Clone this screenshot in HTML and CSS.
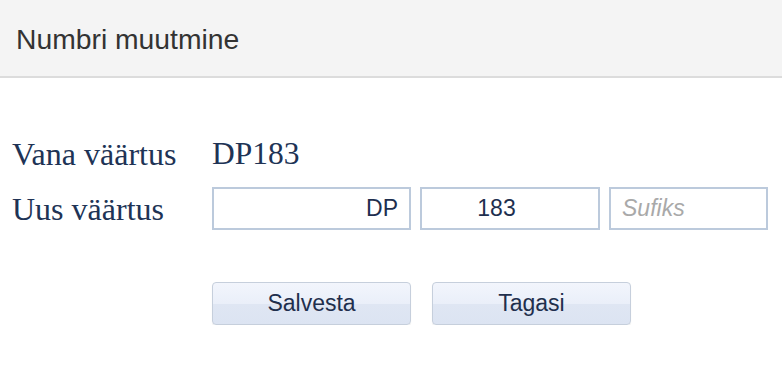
FILE: index.html
```html
<!DOCTYPE html>
<html lang="et">
<head>
<meta charset="utf-8">
<title>Numbri muutmine</title>
<link rel="stylesheet" href="styles.css">
</head>
<body>
<div class="header"><span class="title">Numbri muutmine</span></div>
<div class="content">
  <div class="row row-old">
    <div class="label">Vana väärtus</div>
    <div class="value">DP183</div>
  </div>
  <div class="row row-new">
    <div class="label">Uus väärtus</div>
    <div class="fields">
      <input class="field field-prefix" type="text" value="DP">
      <input class="field field-number" type="text" value="183">
      <input class="field field-suffix" type="text" placeholder="Sufiks">
    </div>
  </div>
  <div class="actions">
    <button class="btn" type="button">Salvesta</button>
    <button class="btn" type="button">Tagasi</button>
  </div>
</div>
</body>
</html>
```
FILE: styles.css
```css
html, body {
  margin: 0;
  padding: 0;
  background: #ffffff;
}
body {
  font-family: "Liberation Serif", "Times New Roman", serif;
  color: #203355;
}
.header {
  height: 73px;
  padding: 3px 16px 0;
  display: flex;
  align-items: center;
  background: #f4f4f4;
  border-bottom: 2px solid #dcdcdc;
}
.title {
  font-family: "Liberation Sans", Arial, sans-serif;
  font-size: 28.3px;
  color: #333333;
}
.content {
  padding: 58px 0 0 12px;
}
.row {
  display: flex;
  align-items: center;
}
.label {
  width: 200px;
  font-size: 32px;
  line-height: 36px;
}
.value {
  font-size: 31.5px;
  line-height: 36px;
}
.row-new {
  margin-top: 15px;
}
.fields {
  display: flex;
  gap: 9px;
}
.field {
  box-sizing: border-box;
  height: 43px;
  margin: 0;
  padding: 0 11px;
  border: 2px solid #bccadc;
  border-radius: 0;
  outline: none;
  background: #ffffff;
  font-family: "Liberation Sans", Arial, sans-serif;
  font-size: 23px;
  color: #1e2f4f;
}
.field-prefix {
  width: 199px;
  text-align: right;
  padding-right: 11px;
}
.field-number {
  width: 180px;
  text-align: center;
  padding-right: 38px;
}
.field-suffix {
  width: 159px;
  padding-left: 11px;
}
.field::placeholder {
  color: #a9a9a9;
  font-style: italic;
}
.actions {
  display: flex;
  gap: 21px;
  margin: 52px 0 0 200px;
}
.btn {
  box-sizing: border-box;
  width: 199px;
  height: 43px;
  margin: 0;
  padding: 0;
  border: 1px solid #c6cfdc;
  border-radius: 4px;
  background: linear-gradient(to bottom, #f2f5fc 0%, #eaeff9 50%, #dfe6f3 52%, #dce4f2 100%);
  box-shadow: 0 1px 1px rgba(0, 0, 0, 0.08);
  font-family: "Liberation Sans", Arial, sans-serif;
  font-size: 23px;
  color: #1f2f4d;
  cursor: pointer;
}
```
